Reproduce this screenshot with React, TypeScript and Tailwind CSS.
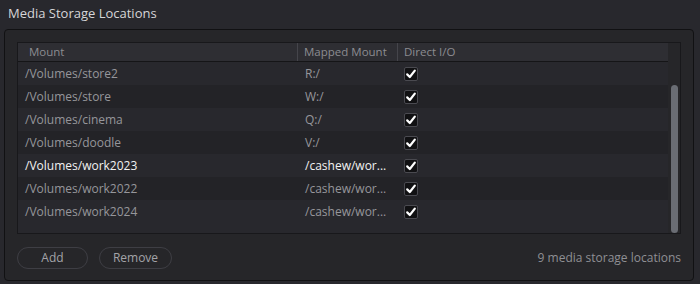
import React from "react"

const rows = [
  { mount: "/Volumes/store2", mapped: "R:/", active: false },
  { mount: "/Volumes/store", mapped: "W:/", active: false },
  { mount: "/Volumes/cinema", mapped: "Q:/", active: false },
  { mount: "/Volumes/doodle", mapped: "V:/", active: false },
  { mount: "/Volumes/work2023", mapped: "/cashew/wor...", active: true },
  { mount: "/Volumes/work2022", mapped: "/cashew/wor...", active: false },
  { mount: "/Volumes/work2024", mapped: "/cashew/wor...", active: false },
]

function Check() {
  return (
    <div className="w-[14px] h-[14px] rounded-[2px] bg-[#111113] border border-[#4a4a50] flex items-center justify-center">
      <svg width="12" height="12" viewBox="0 0 12 12">
        <path d="M2.2 6.4 L4.8 9 L9.8 2.6" fill="none" stroke="#ffffff" strokeWidth="2.2" strokeLinecap="round" strokeLinejoin="round" />
      </svg>
    </div>
  )
}

export default function App() {
  return (
    <div className="w-[700px] h-[284px] bg-[#28282d] font-['Open_Sans',sans-serif] overflow-hidden">
      <div className="h-[28px] px-2 flex items-center text-[13px] text-[#d6d6d8]">Media Storage Locations</div>

      <div className="ml-[4px] mt-[1px] w-[690px] h-[252px] border border-[#111113] rounded-[4px] bg-[#262629] px-3 pt-3 flex flex-col">
        <div className="h-[192px] border border-[#18181b] flex bg-[#262629]">
          <div className="flex-1 flex flex-col">
            <div className="h-[19px] bg-[#2e2e33] border-b border-[#151517] flex text-[11.5px] text-[#8c8c91] items-center shrink-0">
              <div className="w-[280px] pl-[11px] h-full flex items-center border-r border-[#45454b]">Mount</div>
              <div className="w-[100px] pl-[6px] h-full flex items-center border-r border-[#45454b]">Mapped Mount</div>
              <div className="pl-[6px]">Direct I/O</div>
            </div>
            {rows.map((r, i) => (
              <div
                key={r.mount}
                className={`h-[23px] flex items-center text-[12px] shrink-0 ${i % 2 === 0 ? "bg-[#28282d]" : "bg-[#232327]"} ${r.active ? "text-[#f2f2f2]" : "text-[#96969b]"}`}
              >
                <div className="w-[280px] pl-[7px]">{r.mount}</div>
                <div className="w-[100px] pl-[7px]">{r.mapped}</div>
                <div className="pl-[6px]">
                  <Check />
                </div>
              </div>
            ))}
            <div className="flex-1 bg-[#28282d]" />
          </div>
          <div className="w-[12px] flex flex-col pt-[42px] items-center">
            <div className="w-[7px] flex-1 rounded-[4px] bg-[#6a6d74]" />
          </div>
        </div>

        <div className="mt-[13px] flex items-center">
          <button className="w-[71px] h-[22px] rounded-full border border-[#3e3e44] text-[12px] text-[#a3a3a8]">Add</button>
          <button className="ml-[11px] w-[73px] h-[22px] rounded-full border border-[#3e3e44] text-[12px] text-[#a3a3a8]">Remove</button>
          <div className="ml-auto text-[12px] text-[#8f8f94]">9 media storage locations</div>
        </div>
      </div>
    </div>
  )
}
